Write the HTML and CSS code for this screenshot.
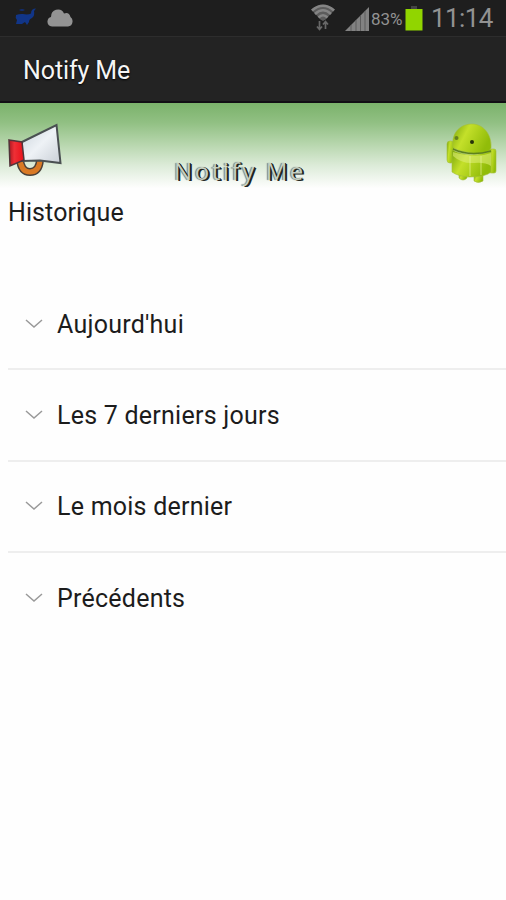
FILE: index.html
```html
<!DOCTYPE html>
<html lang="fr">
<head>
<meta charset="utf-8">
<title>Notify Me</title>
<link rel="stylesheet" href="styles.css">
</head>
<body>
<div class="status">
  <svg class="genie" width="22" height="18" viewBox="0 0 22 18"><path d="M1 7Q5 5.500 8 6Q13 7 16 5.500Q16 .5 21 .5L19 3Q20 8 17 10Q14 11 14 14L12 17L10 14L7 16H1L2 12Q0 10 1 7Z" fill="#113587"/><path d="M4 2Q7 0 10 2Q7 4 4 2Z" fill="#132e70"/></svg>
  <svg class="cloud" width="26" height="18" viewBox="0 0 26 18"><path d="M5 17.5Q0 17 .5 12Q1 8.500 4 8Q4 2 9 .8Q15 -.5 17 4.500Q22 2.500 23.500 8Q26 10 25.500 13Q25 17 21 17.500Z" fill="#939393"/></svg>
  <div class="indicators">
    <svg class="wifi" width="24" height="28" viewBox="0 0 24 28"><path d="M0 5.500Q12 -4 24 5.500L14.500 15.500L12 17L9.500 15.500Z" fill="#5c5c5c"/><g fill="none" stroke="#858585" stroke-width="2.500"><path d="M1 6.500Q12 -3 23 6.500M4 10Q12 2.500 20 10M7.500 13.500Q12 9 16.500 13.500"/></g><path d="M8.500 17V25M6 22.500L8.500 25.500L11 22.500M14.500 25V18M12 20.500L14.500 17.500L17 20.500" fill="none" stroke="#686868" stroke-width="1.700"/></svg>
    <svg class="signal" width="25" height="24" viewBox="0 0 25 24"><path d="M0 24L24 0V24Z" fill="#828282"/><path d="M6 18V24M11 13V24M15.500 9V24M20 4V24" stroke="#5d5d5d" stroke-width="1"/></svg>
    <span class="percent">83%</span>
    <svg class="battery" width="18" height="26" viewBox="0 0 18 26"><path d="M6 1H12V4H6Z" fill="#444"/><path d="M.5 4H17.500V25.500H.5Z" fill="#91d500"/></svg>
    <span class="clock">11:14</span>
  </div>
</div>
<div class="bar"><span class="bar-title">Notify Me</span></div>
<div class="banner">
  <svg class="horn" width="56" height="56" viewBox="0 0 56 56">
    <defs><linearGradient id="cone" x2="1" y2="1"><stop stop-color="#c9d2da"/><stop offset=".5" stop-color="#eef2f6"/><stop offset="1" stop-color="#c9cfd6"/></linearGradient><linearGradient id="red" x2="1"><stop stop-color="#a81720"/><stop offset=".35" stop-color="#ef3036"/><stop offset="1" stop-color="#e80f19"/></linearGradient></defs>
    <path d="M13 37Q14 50 23 50Q32 50 33 38" fill="none" stroke="#4b4038" stroke-width="8"/>
    <path d="M13 37Q14 50 23 50Q32 50 33 38" fill="none" stroke="#d97924" stroke-width="5"/>
    <path d="M15 20L49.500 3L53.500 41L33 38.500L15 39Z" fill="url(#cone)" stroke="#4a5052" stroke-width="2"/>
    <path d="M2 18L15 20L17 38L3 44Z" fill="url(#red)" stroke="#51343a" stroke-width="1.500"/>
  </svg>
  <span class="logo">Notify Me</span>
  <svg class="robot" width="52" height="62" viewBox="0 0 52 62">
    <defs><linearGradient id="skin" x2="1" y2=".4"><stop stop-color="#79a50a"/><stop offset=".4" stop-color="#c4e02a"/><stop offset="1" stop-color="#91bc09"/></linearGradient></defs>
    <g fill="url(#skin)" stroke="#a3bd3d" stroke-width=".6"><rect x="1" y="20" width="7" height="22" rx="3"/><rect x="43" y="28" width="7" height="24" rx="2"/><path d="M13 51H21V57Q17 61 13 57Z"/><path d="M28 53H37V60Q32 63 28 60Z"/><path d="M6 29Q24 38 45 30V51Q40 56 23 56Q11 55 6 51Z"/><path d="M7 26C5 10 16 3 26 3C37 3 46 13 45 27Q43 32 36 32Q28 34 20 31Q9 29 7 26Z"/></g>
    <path d="M7 35Q16 43 28 42Q39 41 45 45V32Q30 38 7 31Z" fill="#dcec73" opacity=".6"/>
    <path d="M7 28Q24 36 45 30" fill="none" stroke="#5e821c" stroke-width="1.500"/>
    <path d="M24 35V55M35 35V54" stroke="#eef7a8" opacity=".6"/>
    <circle cx="10.500" cy="17" r="2" fill="#66801d"/><circle cx="26" cy="21" r="2" fill="#26330a"/>
  </svg>
</div>
<h1 class="heading"><span>Historique</span></h1>
<div class="list">
  <div class="row"><svg class="chevron" width="18" height="10" viewBox="0 0 18 10"><path d="M1 1L9 8L17 1"/></svg><span>Aujourd'hui</span></div>
  <div class="row"><svg class="chevron" width="18" height="10" viewBox="0 0 18 10"><path d="M1 1L9 8L17 1"/></svg><span>Les 7 derniers jours</span></div>
  <div class="row"><svg class="chevron" width="18" height="10" viewBox="0 0 18 10"><path d="M1 1L9 8L17 1"/></svg><span>Le mois dernier</span></div>
  <div class="row"><svg class="chevron" width="18" height="10" viewBox="0 0 18 10"><path d="M1 1L9 8L17 1"/></svg><span>Précédents</span></div>
</div>
</body>
</html>
```
FILE: styles.css
```css
* { box-sizing: border-box; }
body { margin: 0; height: 900px; overflow: hidden; background: #fefefe; color: #1c1c1c; font-family: Roboto, "Liberation Sans", sans-serif; }
svg { display: block; flex: none; }
span { white-space: nowrap; }
.status { display: flex; align-items: flex-start; height: 36px; background: #1e1e1e; }
.genie { margin: 8px 0 0 15px; }
.cloud { margin: 9px 0 0 10px; }
.indicators { display: flex; align-items: flex-start; margin-left: auto; padding-right: 13px; color: #929292; }
.wifi { margin-top: 4px; }
.signal { margin: 7px 0 0 10px; }
.percent { margin: 8px 0 0 1px; width: 34px; font-size: 17px; line-height: 22px; }
.battery { margin: 5px 0 0; }
.clock { margin-left: 8px; width: 62px; font-size: 26px; line-height: 36px; letter-spacing: -.6px; }
.bar { display: flex; align-items: center; height: 67px; padding: 4px 0 0 23px; background: #232323; border-top: 1px solid #2d2d2d; border-bottom: 2px solid #120e14; color: #f5f5f5; }
.bar-title { font-size: 25px; line-height: 30px; letter-spacing: -.1px; text-shadow: 0 1px 2px #000; }
.banner { display: flex; align-items: flex-start; height: 89px; padding: 0 8px 0 7px; background: linear-gradient(#7bb26b 0, #91c083 22%, #b5d5ab 45%, #dcebd8 70%, #fefefe 96%); }
.horn { margin-top: 19px; }
.robot { margin: 18px 0 0 auto; }
.logo { margin: 52px 0 0 111px; font: 400 24px/32px "Open Sans", sans-serif; letter-spacing: 2.6px; color: #c5cfc1; text-shadow: 1px 0 0 #1c1f1b, 2px 1px 0 #22261f, -1px 0 1px #747c70; }
.heading { margin: 0; height: 87px; padding: 6px 8px; font-size: 25px; line-height: 30px; font-weight: 400; letter-spacing: .1px; }
.list { margin-left: 8px; }
.row { display: flex; align-items: center; height: 91.300px; padding: 0 0 0 17px; border-bottom: 2px solid #eee; font-size: 25px; line-height: 30px; letter-spacing: .24px; }
.row span { padding-top: 2px; }
.row:last-child { border-color: transparent; }
.chevron { margin-right: 14px; }
.chevron path { fill: none; stroke: #999; stroke-width: 1.500; }
```
